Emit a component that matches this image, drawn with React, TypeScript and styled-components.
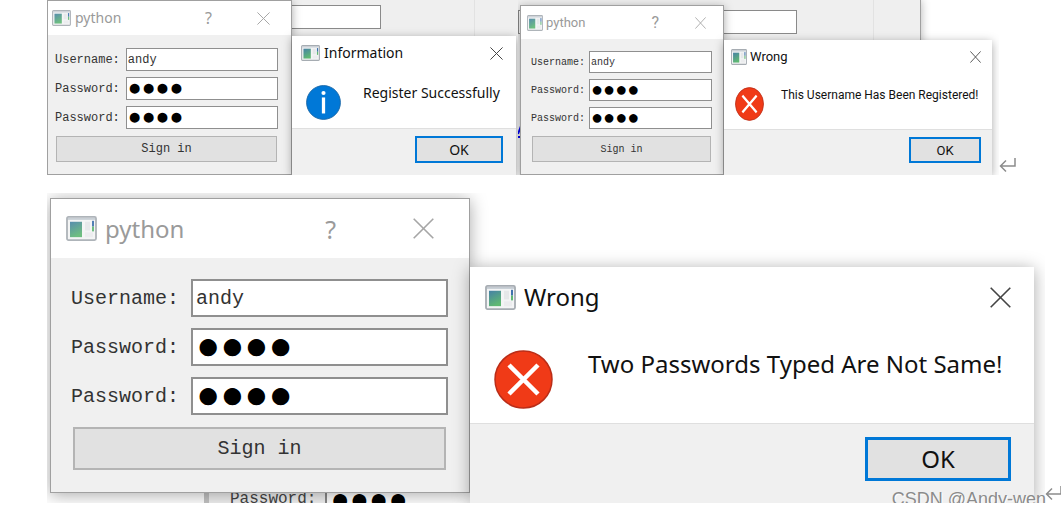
import React, { useId } from "react";
import styled, { createGlobalStyle, css } from "styled-components";

interface Metrics {
  font: string;
  bar: number;
  formBar: number;
  barPad: number;
  formBarPad: number;
  edge: number;
  icon: [number, number];
  iconGap: number;
  title: number;
  close: [number, number];
  help: number;
  helpGap: number;
  closePad: number;
  mono: number;
  dots: number;
  field: number;
  rowGap: number;
  labelGap: number;
  formPad: string;
  button: number;
  buttonTop: number;
  line: number;
  message: number;
  messageLine: number;
  badge: [number, number];
  badgeGap: number;
  body: number;
  bodyPad: string;
  footer: number;
  footerPad: number;
  ok: [number, number];
}

const regular: Metrics = {
  font: '"Noto Sans", sans-serif',
  bar: 34, formBar: 34, barPad: 9, formBarPad: 4, edge: 13,
  icon: [19, 16], iconGap: 4, title: 14, close: [13, 13],
  help: 16, helpGap: 45, closePad: 21,
  mono: 12, dots: 23, field: 23, rowGap: 6, labelGap: 6, formPad: "13px 13px 12px 7px",
  button: 26, buttonTop: 1, line: 1,
  message: 14, messageLine: 20, badge: [35, 35], badgeGap: 22,
  body: 58, bodyPad: "13px 0 0 14px", footer: 47, footerPad: 7, ok: [88, 27],
};

const narrow: Metrics = {
  ...regular,
  font: "Roboto, sans-serif",
  formBar: 33, barPad: 7, formBarPad: 6, edge: 11,
  icon: [16, 16], iconGap: 3, title: 13, close: [11, 12],
  helpGap: 36, closePad: 17,
  mono: 10, dots: 20, field: 22, labelGap: 4, formPad: "12px 11px 12px 10px",
  message: 12, badge: [29, 34], badgeGap: 17,
  body: 55, bodyPad: "11px 0 0 11px", footer: 46, ok: [72, 26],
};

const large: Metrics = {
  font: '"Noto Sans", sans-serif',
  bar: 60, formBar: 59, barPad: 15, formBarPad: 15, edge: 23,
  icon: [31, 25], iconGap: 8, title: 24, close: [21, 21],
  help: 25, helpGap: 77, closePad: 35,
  mono: 20, dots: 40, field: 38, rowGap: 11, labelGap: 12, formPad: "21px 21px 22px 20px",
  button: 43, buttonTop: 1, line: 2,
  message: 24, messageLine: 32, badge: [59, 59], badgeGap: 35,
  body: 96, bodyPad: "21px 0 0 24px", footer: 80, footerPad: 13, ok: [146, 44],
};

type M = { $m: Metrics };

const GlobalStyle = createGlobalStyle`
  *, *::before, *::after { box-sizing: border-box; }
  body {
    margin: 0;
    background: #fff;
    color: #111;
    font-family: "Noto Sans", sans-serif;
    overflow: hidden;
  }
  button, input { font: inherit; color: inherit; margin: 0; border-radius: 0; }
`;

const Page = styled.main`
  display: flex;
  flex-direction: column;
  gap: 18px;
  padding-left: 47px;
`;

const Figure = styled.div`
  position: relative;
  display: flex;
  align-items: flex-end;
`;

const Scene = styled.section<{ $grow: number; $pad: string; $bg: string }>`
  position: relative;
  display: flex;
  align-items: flex-start;
  flex: ${(p) => p.$grow} 1 0;
  padding: ${(p) => p.$pad};
  background: ${(p) => p.$bg};
  overflow: hidden;
`;

const ReturnMark = styled.div<{ $width: number }>`
  flex: 0 0 ${(p) => p.$width}px;
  min-width: 0;
  svg { display: block; }
`;

const Frame = styled.section<M & { $grow: number; $top: number; $dialog?: boolean }>`
  position: relative;
  flex: ${(p) => p.$grow} 1 0;
  min-width: 0;
  margin-top: ${(p) => p.$top}px;
  background: #f0f0f0;
  box-shadow: 0 2px ${(p) => (p.$m.line > 1 ? 16 : 9)}px rgba(0, 0, 0, 0.34);
  font-family: ${(p) => p.$m.font};
  ${(p) => !p.$dialog && css`border: 1px solid #a0a0a0;`}
`;

const TitleBar = styled.header<M & { $form?: boolean }>`
  display: flex;
  align-items: center;
  height: ${(p) => (p.$form ? p.$m.formBar : p.$m.bar)}px;
  padding-left: ${(p) => (p.$form ? p.$m.formBarPad : p.$m.barPad)}px;
  padding-right: ${(p) => (p.$form ? p.$m.closePad : p.$m.edge)}px;
  background: #fff;
  color: ${(p) => (p.$form ? "#9a9a9a" : "#111")};
`;

const AppIcon = styled.svg<M>`
  flex: none;
  width: ${(p) => p.$m.icon[0]}px;
  height: ${(p) => p.$m.icon[1]}px;
  margin-right: ${(p) => p.$m.iconGap}px;
`;

const Title = styled.h2<M>`
  flex: 1;
  margin: 0;
  font-size: ${(p) => p.$m.title}px;
  line-height: ${(p) => p.$m.messageLine}px;
  font-weight: 400;
`;

const IconButton = styled.button`
  display: block;
  flex: none;
  padding: 0;
  border: 0;
  background: none;
  svg { display: block; }
`;

const HelpButton = styled(IconButton)<M>`
  margin-right: ${(p) => p.$m.helpGap}px;
  font-size: ${(p) => p.$m.help}px;
  line-height: ${(p) => p.$m.messageLine}px;
`;

const Form = styled.form<M>`
  display: grid;
  grid-template-columns: auto 1fr;
  align-items: center;
  column-gap: ${(p) => p.$m.labelGap}px;
  row-gap: ${(p) => p.$m.rowGap}px;
  padding: ${(p) => p.$m.formPad};
  font-family: "Liberation Mono", monospace;
  font-size: ${(p) => p.$m.mono}px;
  color: #333;
`;

const Label = styled.label`
  white-space: nowrap;
`;

const Field = styled.input<M & { $masked?: boolean }>`
  width: 100%;
  min-width: 0;
  height: ${(p) => p.$m.field}px;
  padding: 0 ${(p) => p.$m.line * 2 - 1}px;
  border: ${(p) => p.$m.line}px solid #8f8f8f;
  background: #fff;
  outline: none;
  ${(p) =>
    p.$masked &&
    css`
      padding-bottom: ${p.$m.line * 2}px;
      color: #000;
      font-family: "Liberation Sans", sans-serif;
      font-size: ${p.$m.dots}px;
    `}
`;

const SignIn = styled.button<M>`
  grid-column: 1 / -1;
  height: ${(p) => p.$m.button}px;
  margin: ${(p) => p.$m.buttonTop}px ${(p) => p.$m.line}px 0;
  padding: 0;
  border: ${(p) => p.$m.line}px solid #b4b4b4;
  background: #e1e1e1;
`;

const Body = styled.div<M>`
  display: flex;
  align-items: flex-start;
  height: ${(p) => p.$m.body}px;
  padding: ${(p) => p.$m.bodyPad};
  background: #fff;
`;

const Badge = styled.svg<M>`
  flex: none;
  width: ${(p) => p.$m.badge[0]}px;
  height: ${(p) => p.$m.badge[1]}px;
  margin: 2px ${(p) => p.$m.badgeGap}px 0 0;
`;

const Message = styled.p<M>`
  margin: 0;
  font-size: ${(p) => p.$m.message}px;
  line-height: ${(p) => p.$m.messageLine}px;
  white-space: nowrap;
`;

const Footer = styled.footer<M>`
  display: flex;
  justify-content: flex-end;
  align-items: flex-start;
  height: ${(p) => p.$m.footer}px;
  padding: ${(p) => p.$m.footerPad}px ${(p) => p.$m.edge}px 0;
  border-top: 1px solid #dfdfdf;
  background: #f0f0f0;
`;

const OkButton = styled.button<M>`
  width: ${(p) => p.$m.ok[0]}px;
  height: ${(p) => p.$m.ok[1]}px;
  padding: 0;
  border: ${(p) => (p.$m.line > 1 ? 3 : 2)}px solid #0078d7;
  background: #e1e1e1;
  font-size: ${(p) => p.$m.title}px;
  line-height: 1;
`;

const BackField = styled.div<{ $w: number; $top: number }>`
  position: absolute;
  left: 0;
  top: ${(p) => p.$top}px;
  width: ${(p) => p.$w}px;
  height: 24px;
  border: 1px solid #8a8a8a;
  background: #fff;
`;

const BackPanel = styled.div<{ $w: number }>`
  position: absolute;
  inset: 0 auto 0 0;
  width: ${(p) => p.$w}px;
  border-right: 1px solid #a0a0a0;
  background: #efefef;
  box-shadow: 0 0 9px rgba(0, 0, 0, 0.3);
`;

const BackRule = styled.div<{ $x: number }>`
  position: absolute;
  inset: 0 auto 0 ${(p) => p.$x}px;
  width: 1px;
  background: #e2e2e2;
`;

const BackLink = styled.svg`
  position: absolute;
  left: 0;
  top: 125px;
`;

const BackForm = styled.div`
  position: absolute;
  left: 157px;
  right: 0;
  bottom: 0;
  height: 20px;
  display: flex;
  gap: 9px;
  padding-left: 21px;
  border-left: 5px solid #c4c4c4;
  background: #f0f0f0;
  overflow: hidden;
  font: 16px/32px "Liberation Mono", monospace;
  color: #444;
`;

const BackDots = styled.span`
  flex: 1;
  padding-left: 3px;
  border-left: 2px solid #8a8a8a;
  background: #fff;
  color: #000;
  font: 32px/32px "Liberation Sans", sans-serif;
`;

const Watermark = styled.p`
  position: absolute;
  right: 15px;
  bottom: -8px;
  margin: 0;
  font: 18px/24px "Liberation Sans", sans-serif;
  color: #8b8b8b;
  text-shadow: 1px 1px 0 #fff;
`;

const WindowGlyph = ({ m, faded }: { m: Metrics; faded?: boolean }) => {
  const id = useId();
  return (
    <AppIcon $m={m} viewBox="0 0 31 26" preserveAspectRatio="none" aria-hidden="true" opacity={faded ? 0.9 : 1}>
      <defs>
        <linearGradient id={id} x1="0" y1="0" x2="0.4" y2="1">
          <stop offset="0" stopColor="#4681a6" />
          <stop offset="1" stopColor="#5fb873" />
        </linearGradient>
      </defs>
      <rect x="1" y="1" width="29" height="24" rx="1.5" fill="#f3f4f5" stroke="#a6acb2" strokeWidth="1.8" />
      <path d="M2 3h27" stroke="#c3cad1" strokeWidth="2" />
      <rect x="4" y="6" width="12" height="16" fill={`url(#${id})`} />
      <rect x="19" y="6" width="5" height="9" fill="#e5e7e9" />
      <rect x="19" y="17" width="8" height="5" fill="#ebecee" />
      <rect x="26" y="5" width="2" height="6" fill="#3f72ad" />
      <rect x="26" y="11" width="2" height="5" fill="#5fb873" />
    </AppIcon>
  );
};

const CloseButton = ({ m, color }: { m: Metrics; color: string }) => (
  <IconButton type="button" aria-label="Close">
    <svg width={m.close[0]} height={m.close[1]} viewBox="0 0 21 21" preserveAspectRatio="none">
      <path d="M.7.7l19.6 19.6M20.3.7L.7 20.3" stroke={color} strokeWidth="1.6" fill="none" />
    </svg>
  </IconButton>
);

const ReturnGlyph = () => (
  <svg width="18" height="18" viewBox="0 0 18 18" aria-hidden="true">
    <path d="M16 1v8H2M7 3.5L1.5 9L7 14.5" fill="none" stroke="#8c8c8c" strokeWidth="1.5" />
  </svg>
);

interface WindowProps {
  m: Metrics;
  grow: number;
  top: number;
}

const LoginWindow = ({ m, grow, top }: WindowProps) => {
  const id = useId();
  return (
    <Frame $m={m} $grow={grow} $top={top}>
      <TitleBar $m={m} $form>
        <WindowGlyph m={m} faded />
        <Title $m={m}>python</Title>
        <HelpButton $m={m} type="button" aria-label="Help">?</HelpButton>
        <CloseButton m={m} color="#a6a6a6" />
      </TitleBar>
      <Form $m={m} onSubmit={(e) => e.preventDefault()}>
        <Label htmlFor={`${id}u`}>Username:</Label>
        <Field $m={m} id={`${id}u`} defaultValue="andy" />
        <Label htmlFor={`${id}p`}>Password:</Label>
        <Field $m={m} $masked id={`${id}p`} defaultValue="●●●●" />
        <Label htmlFor={`${id}r`}>Password:</Label>
        <Field $m={m} $masked id={`${id}r`} defaultValue="●●●●" />
        <SignIn $m={m} type="submit">Sign in</SignIn>
      </Form>
    </Frame>
  );
};

interface MessageProps extends WindowProps {
  title: string;
  text: string;
  kind: "info" | "error";
}

const MessageWindow = ({ m, grow, top, title, text, kind }: MessageProps) => (
  <Frame $m={m} $grow={grow} $top={top} $dialog>
    <TitleBar $m={m}>
      <WindowGlyph m={m} />
      <Title $m={m}>{title}</Title>
      <CloseButton m={m} color="#444" />
    </TitleBar>
    <Body $m={m}>
      <Badge $m={m} viewBox="0 0 59 59" preserveAspectRatio="none" aria-hidden="true">
        {kind === "info" ? (
          <>
            <circle cx="29.5" cy="29.5" r="28.5" fill="#0078d7" stroke="#1764a5" strokeWidth="1.5" />
            <circle cx="29.5" cy="13.5" r="3.5" fill="#fff" />
            <path d="M29.5 21v27" stroke="#fff" strokeWidth="5.5" />
          </>
        ) : (
          <>
            <circle cx="29.5" cy="29.5" r="28.5" fill="#f03a17" stroke="#ba2d18" strokeWidth="1.5" />
            <path d="M15 15l29 29M44 15L15 44" stroke="#fff" strokeWidth="4.5" />
          </>
        )}
      </Badge>
      <Message $m={m}>{text}</Message>
    </Body>
    <Footer $m={m}>
      <OkButton $m={m} type="button">OK</OkButton>
    </Footer>
  </Frame>
);

export default function App() {
  return (
    <>
      <GlobalStyle />
      <Page>
        <Figure>
          <Scene $grow={469} $pad="0 2px 0 0" $bg="#efefef">
            <BackField $w={334} $top={5} />
            <BackRule $x={427} />
            <LoginWindow m={regular} grow={243} top={0} />
            <MessageWindow m={regular} grow={224} top={36} title="Information" text="Register Successfully" kind="info" />
          </Scene>
          <Scene $grow={472} $pad="0 7px 0 2px" $bg="#fff">
            <BackPanel $w={403} />
            <BackField $w={279} $top={10} />
            <BackRule $x={355} />
            <BackLink width="4" height="14" viewBox="0 0 4 14" aria-hidden="true">
              <path d="M0 9L3 1M0 12h4" stroke="#0000f0" strokeWidth="2" fill="none" />
            </BackLink>
            <LoginWindow m={narrow} grow={202} top={5} />
            <MessageWindow
              m={narrow}
              grow={268}
              top={40}
              title="Wrong"
              text="This Username Has Been Registered!"
              kind="error"
            />
          </Scene>
          <ReturnMark $width={62}>
            <ReturnGlyph />
          </ReturnMark>
        </Figure>
        <Figure>
          <Scene $grow={998} $pad="5px 11px 0 3px" $bg="#fff">
            <BackForm>
              <span>Password:</span>
              <BackDots>●●●●</BackDots>
            </BackForm>
            <LoginWindow m={large} grow={418} top={0} />
            <MessageWindow
              m={large}
              grow={564}
              top={69}
              title="Wrong"
              text="Two Passwords Typed Are Not Same!"
              kind="error"
            />
          </Scene>
          <ReturnMark $width={16}>
            <ReturnGlyph />
          </ReturnMark>
          <Watermark>CSDN @Andy-wen</Watermark>
        </Figure>
      </Page>
    </>
  );
}
